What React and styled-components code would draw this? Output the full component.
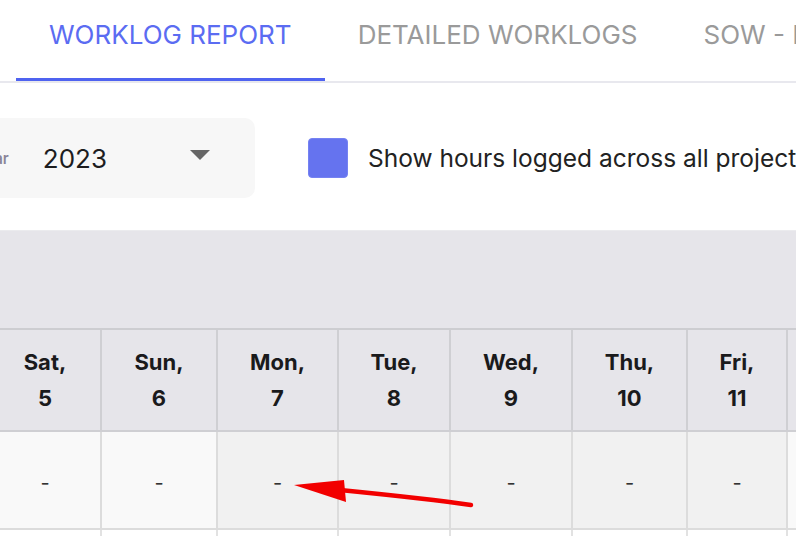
import { styled, createGlobalStyle } from "styled-components";

const GlobalStyle = createGlobalStyle`
  html, body {
    margin: 0;
    padding: 0;
    background: #fff;
  }
  body {
    font-family: Inter, "Noto Sans", sans-serif;
    color: #1d1d1f;
  }
`;

const days = [
  { name: "Sat", date: 5, weekend: true },
  { name: "Sun", date: 6, weekend: true },
  { name: "Mon", date: 7 },
  { name: "Tue", date: 8 },
  { name: "Wed", date: 9 },
  { name: "Thu", date: 10 },
  { name: "Fri", date: 11 },
];

const App = () => {
  return (
    <Page>
      <GlobalStyle />
      <TabBar>
        <Tab $active>WORKLOG REPORT</Tab>
        <Tab>DETAILED WORKLOGS</Tab>
        <Tab>SOW - HOURS</Tab>
      </TabBar>

      <Filters>
        <Select>
          <SelectLabel>Year</SelectLabel>
          <SelectValue>2023</SelectValue>
          <Caret />
        </Select>
        <CheckRow>
          <CheckBox />
          <CheckText>Show hours logged across all projects</CheckText>
        </CheckRow>
      </Filters>

      <Table>
        <Band />
        <Row>
          {days.map((d) => (
            <HeadCell key={d.name}>
              {d.name},
              <br />
              {d.date}
            </HeadCell>
          ))}
          <HeadCell />
        </Row>
        <Row>
          {days.map((d) => (
            <BodyCell key={d.name} $weekend={d.weekend}>
              -
            </BodyCell>
          ))}
          <BodyCell $weekend />
        </Row>
        <Row>
          {days.map((d) => (
            <EmptyCell key={d.name} />
          ))}
          <EmptyCell />
        </Row>
      </Table>

      <Arrow viewBox="0 0 796 536">
        <path
          d="M340 490 C 380 494, 430 499, 471 505"
          stroke="#f20000"
          strokeWidth="4.5"
          fill="none"
          strokeLinecap="round"
        />
        <polygon points="294,485 344,480 346,502" fill="#f20000" />
      </Arrow>
    </Page>
  );
};

const Page = styled.div`
  position: relative;
  width: 796px;
  height: 536px;
  overflow: hidden;
`;

const TabBar = styled.div`
  display: flex;
  height: 81px;
  padding-left: 16px;
  border-bottom: 2px solid #e8e8ee;
`;

const Tab = styled.div`
  flex-shrink: 0;
  box-sizing: border-box;
  height: 81px;
  padding: 20px 33px 0;
  font-size: 26px;
  line-height: 30px;
  white-space: nowrap;
  color: ${(p) => (p.$active ? "#5b6cf2" : "#9a9a9a")};
  border-bottom: 3px solid ${(p) => (p.$active ? "#4f63f0" : "transparent")};
`;

const Filters = styled.div`
  display: flex;
  align-items: center;
  padding: 35px 0 32px;
  margin-left: -40px;
`;

const Select = styled.div`
  flex-shrink: 0;
  display: flex;
  align-items: center;
  width: 295px;
  height: 80px;
  box-sizing: border-box;
  padding: 0 45px 0 16px;
  background: #f7f7f7;
  border-radius: 10px;
`;

const SelectLabel = styled.span`
  font-size: 15px;
  font-weight: 600;
  color: #8a8599;
  margin-right: 34px;
`;

const SelectValue = styled.span`
  font-size: 26px;
  color: #1d1d1f;
`;

const Caret = styled.span`
  margin-left: auto;
  width: 0;
  height: 0;
  border-left: 10px solid transparent;
  border-right: 10px solid transparent;
  border-top: 10px solid #666;
  margin-top: -6px;
`;

const CheckRow = styled.div`
  flex-shrink: 0;
  display: flex;
  align-items: center;
  margin-left: 53px;
  white-space: nowrap;
`;

const CheckBox = styled.span`
  width: 40px;
  height: 40px;
  box-sizing: border-box;
  border-radius: 4px;
  background: #6573ef;
  border: 1px solid #7582f2;
`;

const CheckText = styled.span`
  margin-left: 20px;
  font-size: 24.5px;
  color: #222;
`;

const Table = styled.div`
  margin-left: -10px;
  width: 820px;
`;

const Band = styled.div`
  box-sizing: border-box;
  height: 100px;
  background: #e6e5ea;
  border-top: 1px solid #ebebee;
  border-bottom: 2px solid #cdcdd1;
`;

const Row = styled.div`
  display: grid;
  grid-template-columns: 112px 116px 121px 112px 122px 115px 100px 1fr;
`;

const HeadCell = styled.div`
  box-sizing: border-box;
  height: 102px;
  display: flex;
  align-items: center;
  justify-content: center;
  text-align: center;
  font-size: 22px;
  font-weight: 700;
  line-height: 36px;
  color: #1a1a1c;
  background: #e6e5ea;
  border-right: 2px solid #cfcfd3;
  border-bottom: 2px solid #cfcfd3;
`;

const BodyCell = styled.div`
  box-sizing: border-box;
  height: 98px;
  padding-top: 6px;
  display: flex;
  align-items: center;
  justify-content: center;
  font-size: 20px;
  color: #333;
  background: ${(p) => (p.$weekend ? "#f9f9f9" : "#f1f1f1")};
  border-right: 2px solid #dcdcdc;
  border-bottom: 2px solid #dcdcdc;
`;

const EmptyCell = styled.div`
  box-sizing: border-box;
  height: 40px;
  background: #fff;
  border-right: 2px solid #e2e2e2;
`;

const Arrow = styled.svg`
  position: absolute;
  left: 0;
  top: 0;
  width: 796px;
  height: 536px;
  pointer-events: none;
`;

export default App;
